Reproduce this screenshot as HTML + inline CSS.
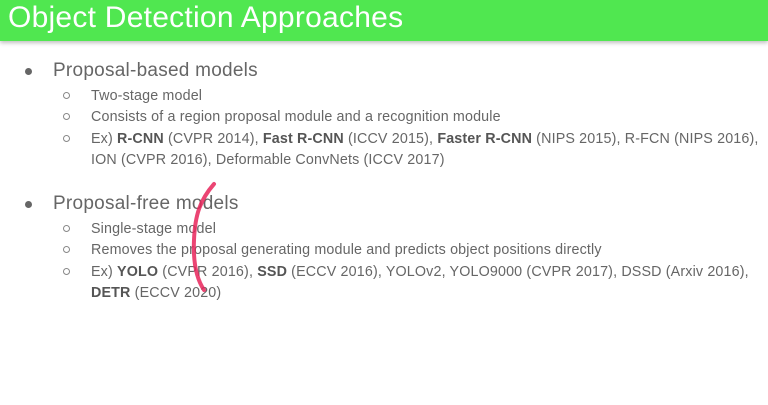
<!DOCTYPE html>
<html><head><style>
body{margin:0;width:768px;height:405px;background:#fff;font-family:"Liberation Sans",sans-serif;overflow:hidden;position:relative}
.hd{position:absolute;left:0;top:0;width:768px;height:41px;background:#50e750;box-shadow:0 2px 4px rgba(0,0,0,.25)}
.hd span{position:absolute;left:8px;top:1px;font-size:30px;letter-spacing:0.25px;color:#fff;white-space:nowrap}
.t{position:absolute;white-space:nowrap;color:#666}
.m{font-size:19px;left:53px;letter-spacing:0.25px}
.s{font-size:14.3px;left:91px;letter-spacing:0.15px}
.s b{color:#555}
.d{position:absolute;left:25px;width:7px;height:7px;border-radius:50%;background:#666}
.c{position:absolute;left:63px;width:5px;height:5px;border-radius:50%;border:1px solid #888}
</style></head><body>
<div class="hd"><span>Object Detection Approaches</span></div>
<div class="d" style="top:68px"></div><div class="t m" style="top:60px">Proposal-based models</div>
<div class="c" style="top:92px"></div><div class="t s" style="top:88px">Two-stage model</div>
<div class="c" style="top:113px"></div><div class="t s" style="top:109px">Consists of a region proposal module and a recognition module</div>
<div class="c" style="top:135px"></div><div class="t s" style="top:131px">Ex) <b>R-CNN</b> (CVPR 2014), <b>Fast R-CNN</b> (ICCV 2015), <b>Faster R-CNN</b> (NIPS 2015), R-FCN (NIPS 2016),</div>
<div class="t s" style="top:152px">ION (CVPR 2016), Deformable ConvNets (ICCV 2017)</div>
<div class="d" style="top:201px"></div><div class="t m" style="top:193px">Proposal-free models</div>
<div class="c" style="top:225px"></div><div class="t s" style="top:221px">Single-stage model</div>
<div class="c" style="top:246px"></div><div class="t s" style="top:242px">Removes the proposal generating module and predicts object positions directly</div>
<div class="c" style="top:268px"></div><div class="t s" style="top:264px">Ex) <b>YOLO</b> (CVPR 2016), <b>SSD</b> (ECCV 2016), YOLOv2, YOLO9000 (CVPR 2017), DSSD (Arxiv 2016),</div>
<div class="t s" style="top:285px"><b>DETR</b> (ECCV 2020)</div>
<svg style="position:absolute;left:0;top:0" width="768" height="405"><path d="M214 184 C200 200,195 215,194 240 C193 262,196 278,204 290" fill="none" stroke="#e8245a" stroke-width="4" stroke-linecap="round" opacity=".85"/></svg>
</body></html>
